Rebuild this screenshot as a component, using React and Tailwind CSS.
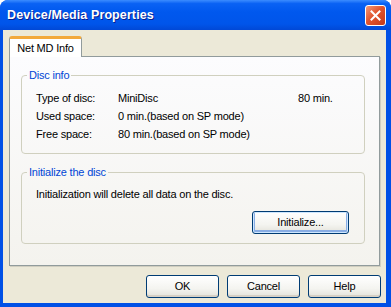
export default function App() {
  const rows = [
    { label: 'Type of disc:', value: 'MiniDisc', extra: '80 min.' },
    { label: 'Used space:', value: '0 min.(based on SP mode)' },
    { label: 'Free space:', value: '80 min.(based on SP mode)' },
  ]

  return (
    <div className="w-[391px] h-[307px] bg-white font-['Liberation_Sans',Arial,sans-serif] text-[11px] tracking-[-0.2px] text-black select-none">
      <div className="w-full h-full flex flex-col rounded-t-[8px] overflow-hidden bg-[#0050E6]">
        {/* Title bar */}
        <div className="h-[30px] flex-shrink-0 flex items-center pl-[7px] pr-[5px] bg-[linear-gradient(to_bottom,#3B8CFF_0%,#0A62F4_12%,#0058EE_40%,#0055EA_80%,#0148D6_100%)]">
          <span className="font-bold text-[12.5px] text-white tracking-[0.1px] [text-shadow:1px_1px_0_#0A1E8C]">
            Device/Media Properties
          </span>
          <button className="ml-auto w-[21px] h-[21px] rounded-[3px] border border-white flex items-center justify-center bg-[linear-gradient(135deg,#F39A7A_0%,#E1552F_45%,#C4391A_100%)]">
            <svg width="11" height="11" viewBox="0 0 11 11">
              <path d="M1.5 1.5 L9.5 9.5 M9.5 1.5 L1.5 9.5" stroke="white" strokeWidth="2" strokeLinecap="square" />
            </svg>
          </button>
        </div>

        {/* Client area */}
        <div className="flex-1 flex flex-col ml-[3px] mr-[5px] mb-[4px] bg-[#ECE9D8] px-[6px] pt-[6px]">
          {/* Tab strip */}
          <div className="flex h-[20px]">
            <div className="relative w-[73px] h-[21px] z-10 bg-white border-x border-[#919B9C] rounded-t-[3px] border-t-[3px] border-t-[#F2A93C] flex items-center justify-center">
              Net MD Info
            </div>
          </div>

          {/* Tab page */}
          <div className="h-[210px] border border-[#919B9C] shadow-[1px_1px_0_#D0CEC0] bg-[linear-gradient(to_bottom,#FCFCFE,#F4F3EE)] pl-[11px] pr-[14px] pt-[10px]">
            {/* Disc info */}
            <fieldset className="h-[87px] border border-[#D0D0BF] rounded-[4px] pl-[14px] pr-[20px] pt-[6px] m-0">
              <legend className="px-[2px] -ml-[9px] text-[#0046D5]">Disc info</legend>
              <div className="flex flex-col">
                {rows.map(r => (
                  <div key={r.label} className="flex h-[18px] items-center">
                    <span className="w-[82px]">{r.label}</span>
                    <span className="w-[180px]">{r.value}</span>
                    {r.extra && <span>{r.extra}</span>}
                  </div>
                ))}
              </div>
            </fieldset>

            {/* Initialize */}
            <fieldset className="mt-[10px] h-[80px] border border-[#D0D0BF] rounded-[4px] pl-[14px] pr-[15px] pt-[5px] m-0">
              <legend className="px-[2px] -ml-[9px] text-[#0046D5]">Initialize the disc</legend>
              <div>Initialization will delete all data on the disc.</div>
              <div className="flex justify-end mt-[9px]">
                <XPButton className="w-[97px] h-[23px]" focused>Initialize...</XPButton>
              </div>
            </fieldset>
          </div>

          {/* Bottom buttons */}
          <div className="flex justify-end gap-[8px] mt-[9px] -mr-[1px]">
            <XPButton className="w-[73px] h-[23px]">OK</XPButton>
            <XPButton className="w-[73px] h-[23px]">Cancel</XPButton>
            <XPButton className="w-[73px] h-[23px]">Help</XPButton>
          </div>
        </div>
      </div>
    </div>
  )
}

function XPButton({ children, className = '', focused }) {
  return (
    <button
      className={`${className} rounded-[3px] border border-[#003C74] bg-[linear-gradient(to_bottom,#FFFFFF_0%,#F4F4F0_60%,#E3E2DA_100%)] flex items-center justify-center text-[11px] ${
        focused ? 'shadow-[inset_0_0_0_1px_#CEE7FF,inset_0_-1px_0_2px_#89ADE4]' : 'shadow-[inset_0_-2px_0_#D6D0C5]'
      }`}
    >
      {children}
    </button>
  )
}
